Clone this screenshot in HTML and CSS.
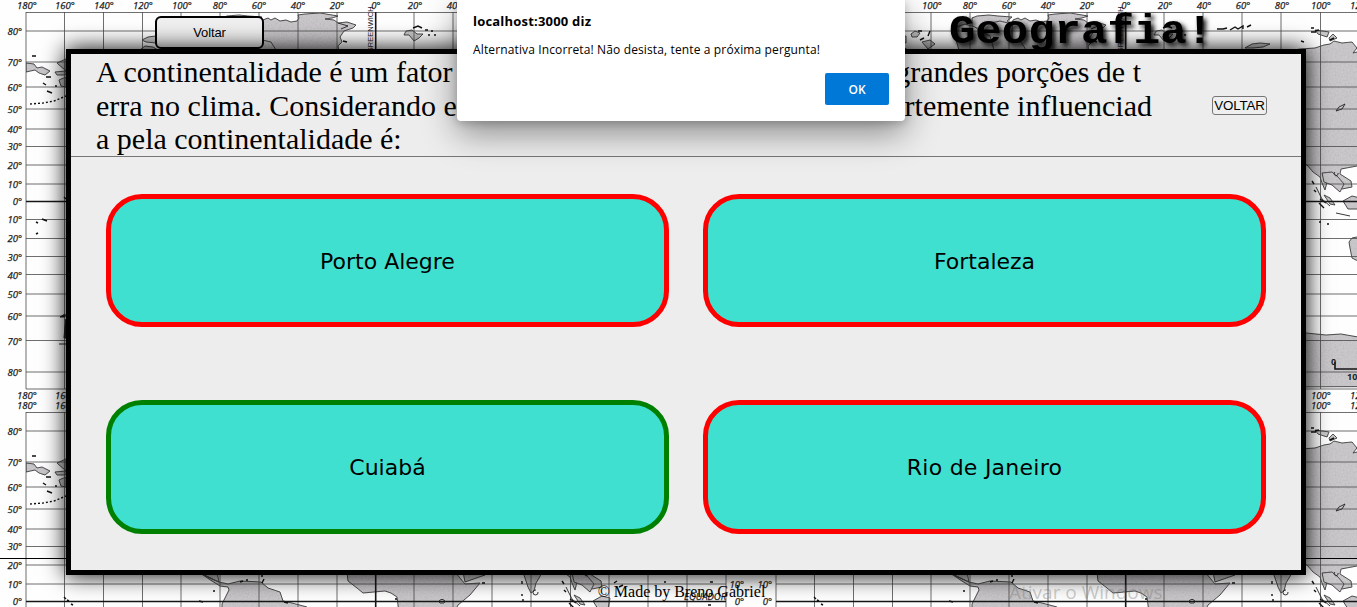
FILE: index.html
```html
<!DOCTYPE html>
<html lang="pt-BR">
<head>
<meta charset="utf-8">
<title>Geografia</title>
<link rel="stylesheet" href="styles.css">
</head>
<body>
<svg class="map" width="1357" height="607" aria-hidden="true">
  <defs>
    <filter id="grain" x="0" y="0" width="100%" height="100%">
      <feTurbulence type="fractalNoise" baseFrequency="0.6" numOctaves="2" seed="4" result="n"/>
      <feColorMatrix in="n" type="matrix" values="0 0 0 0 0.3  0 0 0 0 0.3  0 0 0 0 0.3  0.6 0 0 0 -0.24" result="m"/>
      <feComposite in="m" in2="SourceAlpha" operator="in" result="g"/>
      <feMerge><feMergeNode in="SourceGraphic"/><feMergeNode in="g"/></feMerge>
    </filter>
    <g id="latitudes" class="label" text-anchor="end">
      <text x="22" y="35">80°</text><text x="22" y="66">70°</text><text x="22" y="91">60°</text><text x="22" y="113">50°</text><text x="22" y="133">40°</text><text x="22" y="150">30°</text><text x="22" y="169">20°</text><text x="22" y="188">10°</text><text x="22" y="205">0°</text><text x="22" y="223">10°</text><text x="22" y="242">20°</text><text x="22" y="261">30°</text><text x="22" y="279">40°</text><text x="22" y="298">50°</text><text x="22" y="320">60°</text><text x="22" y="345">70°</text><text x="22" y="376">80°</text>
    </g>
    <g id="longitudes" class="label" text-anchor="middle">
      <text x="27" y="9">180°</text><text x="65" y="9">160°</text><text x="104" y="9">140°</text><text x="143" y="9">120°</text><text x="182" y="9">100°</text><text x="220" y="9">80°</text><text x="259" y="9">60°</text><text x="298" y="9">40°</text><text x="337" y="9">20°</text><text x="376" y="9">0°</text><text x="415" y="9">20°</text><text x="454" y="9">40°</text><text x="493" y="9">60°</text><text x="532" y="9">80°</text><text x="571" y="9">100°</text><text x="610" y="9">120°</text><text x="649" y="9">140°</text><text x="687" y="9">160°</text><text x="725" y="9">180°</text>
    </g>
    <g id="world">
      <g class="land" filter="url(#grain)">
        <path d="M263 20l5-2 3 2 4-2 5 3 6-1 5 2 6-1 2-3-1-3 7-1 15-1 18 3-6 2-7 1 9 1 4 3 9-1 9 3-3 3-9 3-4 6 2 5-4 4 2 10h-68l-5-4-3-4-5-2z"/>
        <path d="M222 18l5-2 12-1 9 1 14 1-5 4 4 3-9 2-8 6-12 1-4-5-6 0z"/>
        <path d="M142 40l6-3 8-1v7l-10-1zM161 34l4-3 5 2-3 4-5 0zM172 42l8-2 5 4-7 5zM140 50l5-4 8 1 5 3zM206 27l9-3 10 3 6 5 8 1 3 6 8 2 9 9h-50l-3-10z"/>
        <path d="M262 24l-12-3-14 3-8 6 12 6 4 14h32l-5-8-9-2z"/>
        <path d="M26 63l8 1 3 4 5-1 8 4-5 4-6-2-4-3-9 2zM57 63l9-4v12zM55 72l11-1v4l-9 0zM59 80l7-3v10l-5-1z"/>
        <path d="M406 31l6-1 5 4 6 0-4 4-5 3-5-6-5 0zM495 48l7-4 8-1 10 1-7 3-10 1zM565 30l8 1 6 1-2 5-9-3zM579 38l4-4 4 4-7 3z"/>
        <path d="M520 60l12-8 18-3 15-1 9-3 6-1 4-3 8 2 10-1 5 6-4 5 8-2 10 4V164L607 166 591 169 590 174 601 181 602 187 592 189 585 182 577 182 575 190 572 183 570 177 563 172 557 165 546 163 520 160z"/>
        <path d="M200 173L212 179 219 182 217 172H200zM200 173L212 181 220 186 228 187 229 190 222 204V213H310L307 207 292 203 283 201 280 192 268 188 261 182 240 181 228 184 219 182z"/>
        <path d="M347 172L348 181 357 188 363 193 385 191 391 193 397 197 399 213H454L458 205 470 195 480 183 465 184 455 172z"/>
        <path d="M463 172L465 182 485 175zM523 172l5 15 3 6 3-2 2-8 6-10zM572 173l2 9 8 3 8 7 4-8-6-7-6-5zM593 201l9-5 8 2-2 11-10 0zM574 195l6 3 5 7-5-1z" />
        <path d="M599 242l3-4 10-2v27l-10-5-2-10z"/>
        <path d="M100 389v-40l50-5 90-5 50-15h120l90-5 56 14 20 2 15-1 17 3 9 0 4-3 5 1 5 2 6-4 8 3 17 2 83 8v40z"/>
      </g>
      <path class="grid" d="M26 12.5H726M26 31H726M26 62H726M26 87H726M26 109H726M26 129H726M26 146.500H726M26 165H726M26 184H726M26 219.500H726M26 238.500H726M26 256.500H726M26 274.500H726M26 294H726M26 316H726M26 340.500H726M26 372H726M26 389H726M26 12V389M64.500 12V389M103.500 12V389M142.500 12V389M181 12V389M220 12V389M259 12V389M298 12V389M337 12V389M414 12V389M453 12V389M492 12V389M531 12V389M570.500 12V389M609 12V389M648 12V389M687 12V389M726 12V389"/>
      <path class="axis" d="M26 201.500H726M375.700 12V389"/>
      <path class="ice" d="M66 319v19h-2l1-12zM60 317l5-3v3zM59 344h7"/>
      <path class="specks" d="M32 56h4M46 77h5M43 83l3 2M47 91l5 2M55 86h2M36 222l2 1M42 219l5 2M36 234l2-1M64 197l2 2M67 200l2 1M71 204l2 1M413 28l5-2 4 2M425 30h3M431 31h2M428 35h2M434 35h2M467 29h6l4-1M480 30l5-3 3 2 5-3v3M497 27l4-2M561 28h3M561 32h5M565 31l4-1M580 40l4-2M551 41l3 1M343 41l4 1M168 31h4M170 40l4-2M178 36l2-5M213 191h2M199 201l4 1M240 182l3-1M246 180h2M261 176h2M264 179l-2 4M284 202l4 1M395 199h2M482 183h3M522 181v3M522 194v2M523 199v2M562 181l2 3M564 190l2 2M570 199l6 4M569 203l5 5M614 183l3-2M619 187l4-2M664 182h2M710 182h3M708 205h3M577 224h2M569 222h2"/>
      <path class="dots" d="M30 104l13-1 11-2 12-5"/>
      <path class="coast" d="M586 111l3-4 6-3-3 5zM585 172a2 2 0 1 0 3 1M536 190a2.500 2.500 0 1 0 2 2M566 187l6 12 8 7M586 213l14 3M338 23l10 3-7 3M440 203a3 2 0 1 1 4 0z"/>
      <path class="axis" d="M585 362v7h45"/>
      <text class="place" transform="translate(373 53) rotate(-90)">GREENWICH</text>
      <text class="scale" x="581" y="365">0</text><text class="scale" x="597" y="380">1000</text>
      <text class="label" x="684" y="200">EQUADOR</text>
      <use href="#latitudes"/>
      <use href="#latitudes" x="722"/>
      <use href="#longitudes"/>
      <use href="#longitudes" y="390"/>
    </g>
  </defs>
  <rect width="1357" height="607" fill="#fefefe"/>
  <use href="#world"/>
  <use href="#world" x="750"/>
  <use href="#world" y="400"/>
  <use href="#world" x="750" y="400"/>
</svg>

<div class="page">
  <header class="top">
    <button class="back">Voltar</button>
    <h1 class="title">Geografia!</h1>
  </header>
  <div class="rule"></div>
  <main class="card">
    <section class="question">
      <div class="statement">
        <p class="line first"><span>A continentalidade é um fator</span><span>grandes porções de t</span></p>
        <p class="line"><span>erra no clima. Considerando esse</span><span>fortemente influenciad</span></p>
        <p class="line"><span>a pela continentalidade é:</span></p>
      </div>
      <button class="return">VOLTAR</button>
    </section>
    <section class="answers">
      <button class="answer">Porto Alegre</button>
      <button class="answer">Fortaleza</button>
      <button class="answer right">Cuiabá</button>
      <button class="answer wide">Rio de Janeiro</button>
    </section>
  </main>
  <footer class="footer">© Made by Breno Gabriel</footer>
</div>
<div class="watermark">Ativar o Windows</div>
<div class="dialog" role="alertdialog">
  <strong class="origin">localhost:3000 diz</strong>
  <p class="message">Alternativa Incorreta! Não desista, tente a próxima pergunta!</p>
  <button class="ok">OK</button>
</div>
</body>
</html>
```

FILE: styles.css
```css
* { box-sizing: border-box; }
body { margin: 0; width: 1357px; height: 607px; overflow: hidden; position: relative; font-family: "Liberation Serif", serif; color: #000; }
button { font-family: "Liberation Sans", sans-serif; font-size: 13.333px; color: #000; padding: 0; }
.map { position: absolute; inset: 0; }
.land path { fill: #cac8ca; stroke: #333; stroke-width: .9; }
.grid { fill: none; stroke: #4a4a4a; stroke-width: .8; }
.axis { fill: none; stroke: #161616; stroke-width: 1.6; }
.ice { fill: #222; stroke: #222; stroke-width: 1; }
.specks { fill: none; stroke: #111; stroke-width: 1.4; }
.dots { fill: none; stroke: #111; stroke-width: 1.4; stroke-dasharray: 2 2; }
.coast { fill: none; stroke: #222; stroke-width: .9; }
.label { font: italic 9.5px "Open Sans", sans-serif; fill: #222; stroke: #222; stroke-width: .25; }
.place { font: 7.500px "Liberation Sans", sans-serif; fill: #222; }
.scale { font: bold 9px "Open Sans", sans-serif; fill: #222; }

.page { position: relative; display: flex; flex-direction: column; height: 607px; }
.top { display: flex; justify-content: space-between; align-items: flex-start; height: 49px; padding: 0 144px 0 155px; }
.back { width: 109px; height: 33px; margin-top: 16px; border: 2px solid #000; border-radius: 6px; background: #efefef; font-size: 13px; letter-spacing: -.1px; }
.title { margin: 6px 0 0; font: bold 44px/50px "Liberation Mono", monospace; transform: scaleY(.92); transform-origin: 50% 80%; text-shadow: 3px 3px 6px #000; }
.rule { height: 1px; background: #000; margin: 509px 0 -510px; flex: none; }
.card { position: relative; flex: none; width: 1240px; height: 526px; margin-left: 66px; border: 5px solid #000; background: #ededed; box-shadow: 0 0 22px #000; }
.question { display: flex; justify-content: space-between; align-items: center; height: 103px; padding: 0 34px 0 25px; border-bottom: 1px solid #777; }
.statement { width: 1056px; padding-top: 1px; }
.line { display: flex; justify-content: space-between; margin: 0; font-size: 30px; line-height: 33.700px; white-space: nowrap; }
.first { width: 1045px; }
.return { width: 55px; height: 19px; border: 1px solid #777; border-radius: 3px; background: #efefef; letter-spacing: -.1px; }
.answers { display: grid; grid-template-columns: 563px 563px; grid-template-rows: 133px 134px; gap: 73px 34px; padding: 37px 35px; }
.answer { border: 5px solid #f00; border-radius: 36px; background: #40e0d0; font: 22px "DejaVu Sans", sans-serif; padding-top: 1px; }
.right { border-color: #008000; }
.wide { letter-spacing: .25px; }
.footer { margin-top: 8px; text-align: center; font-size: 16px; line-height: 18px; padding-left: 6px; }
.watermark { position: absolute; left: 1009px; top: 580px; font: 19px/24px "Open Sans", sans-serif; color: rgba(120,120,120,.4); white-space: nowrap; }
.dialog { position: absolute; left: 457px; top: 0; width: 448px; height: 121px; display: flex; flex-direction: column; padding: 12px 16px 16px; background: #fff; border-radius: 0 0 4px 4px; box-shadow: 0 12px 34px rgba(0,0,0,.42), 0 2px 8px rgba(0,0,0,.2); font-family: "Open Sans", sans-serif; }
.origin { font-size: 13px; letter-spacing: .2px; line-height: 18px; }
.message { margin: 11px 0 0; font-size: 12px; letter-spacing: .13px; line-height: 17px; white-space: nowrap; }
.ok { width: 64px; height: 32px; margin: 15px 0 0 auto; flex: none; border: 0; border-radius: 2px; background: #0078d7; color: #fff; font: 600 12px "Open Sans", sans-serif; }
```
